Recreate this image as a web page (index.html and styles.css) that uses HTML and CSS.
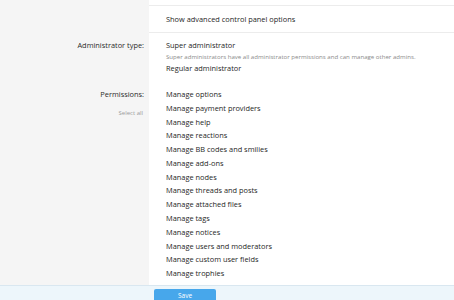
FILE: index.html
```html
<!DOCTYPE html>
<html lang="en">
<head>
  <meta charset="UTF-8">
  <meta name="viewport" content="width=device-width, initial-scale=1.0">
  <title>Administrator</title>
  <link rel="stylesheet" href="styles.css">
</head>
<body>
  <form class="block">
    <div class="block-body">
      <dl class="form-row row-top">
        <dt></dt>
        <dd></dd>
      </dl>

      <dl class="form-row row-check">
        <dt></dt>
        <dd>
          <label class="choice">Show advanced control panel options</label>
        </dd>
      </dl>

      <dl class="form-row row-type">
        <dt>
          <div class="label">Administrator type:</div>
        </dt>
        <dd>
          <label class="choice">Super administrator</label>
          <div class="hint">Super administrators have all administrator permissions and can manage other admins.</div>
          <label class="choice">Regular administrator</label>
        </dd>
      </dl>

      <dl class="form-row row-perms">
        <dt>
          <div class="label">Permissions:</div>
          <div class="select-all">Select all</div>
        </dt>
        <dd>
          <ul class="choices">
            <li>Manage options</li>
            <li>Manage payment providers</li>
            <li>Manage help</li>
            <li>Manage reactions</li>
            <li>Manage BB codes and smilies</li>
            <li>Manage add-ons</li>
            <li>Manage nodes</li>
            <li>Manage threads and posts</li>
            <li>Manage attached files</li>
            <li>Manage tags</li>
            <li>Manage notices</li>
            <li>Manage users and moderators</li>
            <li>Manage custom user fields</li>
            <li>Manage trophies</li>
            <li>Manage user upgrades</li>
            <li>Manage bans</li>
          </ul>
        </dd>
      </dl>
    </div>

    <div class="form-footer">
      <button type="button" class="button">Save</button>
    </div>
  </form>
</body>
</html>
```

FILE: styles.css
```css
html, body {
  margin: 0;
  height: 100%;
}
body {
  font-family: "Open Sans", "Noto Sans", sans-serif;
  font-size: 7.4px;
  color: #262626;
  background: #f5f5f5;
  overflow: hidden;
}
.block {
  display: flex;
  flex-direction: column;
  height: 300px;
}
.block-body {
  flex: 1;
  overflow: hidden;
}
.form-row {
  display: flex;
  margin: 0;
}
.form-row dt {
  width: 149px;
  flex-shrink: 0;
  text-align: right;
  box-sizing: border-box;
  padding: 6px 5px 0 0;
}
.form-row dd {
  flex: 1;
  margin: 0;
  background: #fff;
  padding: 6px 10px 4px 17px;
}
.row-top dd {
  height: 5px;
  padding: 0;
  border-bottom: 1px solid #ececec;
}
.row-check dd {
  padding: 7px 17px 5px;
  border-bottom: 1px solid #ececec;
}
.label {
  line-height: 13.7px;
  color: #2b2b2b;
}
.choice {
  display: block;
  line-height: 13.7px;
}
.hint {
  font-size: 6.1px;
  line-height: 10px;
  color: #8a8a8a;
  white-space: nowrap;
}
.row-perms dt,
.row-perms dd {
  padding-top: 8px;
}
.select-all {
  font-size: 6px;
  line-height: 9px;
  color: #9a9a9a;
  margin-top: 7.5px;
  padding-right: 1px;
}
.choices {
  list-style: none;
  margin: 0;
  padding: 0;
}
.choices li {
  line-height: 13.77px;
}
.form-footer {
  height: 15px;
  flex-shrink: 0;
  display: flex;
  align-items: flex-start;
  background: #edf6fb;
  border-top: 1px solid #d9e7f0;
  padding: 3px 0 0 154px;
  box-sizing: border-box;
  overflow: hidden;
}
.button {
  flex-shrink: 0;
  width: 62px;
  height: 11px;
  border: none;
  border-radius: 2px 2px 0 0;
  background: #47a7eb;
  color: #fff;
  font-family: inherit;
  font-size: 6.5px;
  line-height: 12px;
  padding: 1px 0 0;
  text-align: center;
  overflow: visible;
}
```
